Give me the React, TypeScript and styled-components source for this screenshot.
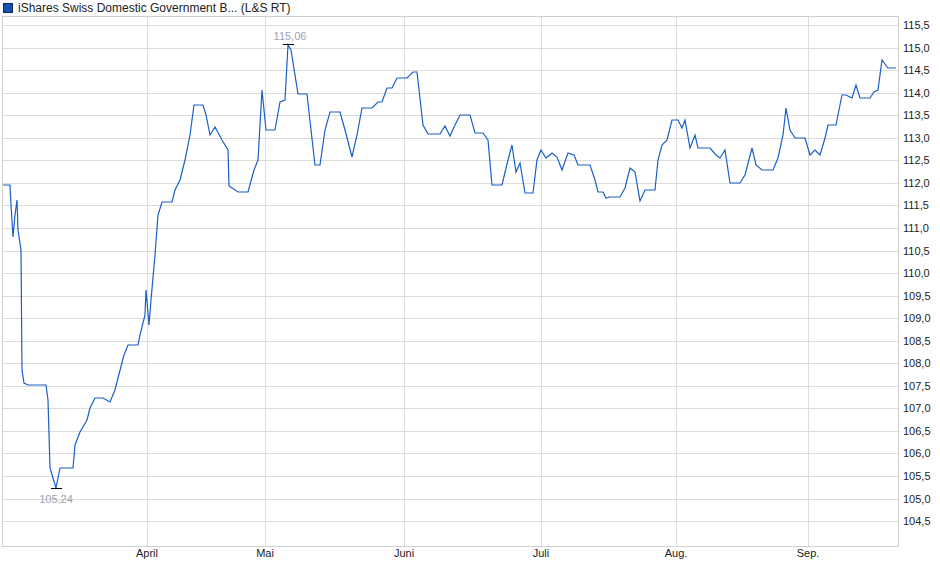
import React from "react";
import styled, { createGlobalStyle } from "styled-components";

const Global = createGlobalStyle`
  html, body { margin: 0; padding: 0; background: #fff; }
  body { font-family: "Liberation Sans", Arial, sans-serif; }
`;

const Page = styled.div`
  width: 940px;
  height: 579px;
  display: flex;
  flex-direction: column;
  background: #fff;
`;

const Legend = styled.div`
  height: 16px;
  display: flex;
  align-items: center;
  gap: 5px;
  padding-left: 3px;
  font-size: 12px;
  color: #222;
`;

const Swatch = styled.span`
  width: 8px;
  height: 8px;
  background: #1a4fb0;
  border: 1px solid #0d2a66;
`;

const Chart = styled.svg`
  display: block;
`;

const pts = `3,185 10,185 11,205 13,237 15,215 17,200 18,230 21,250 22,370 24,383 28,385 46,385 48,400 50,468 53,478 56,488 60,468 73,468 75,445 80,432 87,420 90,408 95,398 103,398 110,402 115,390 118,378 124,355 128,345 138,345 140,335 145,315 146,290 149,325 151,300 155,255 158,215 162,202 172,202 175,190 180,180 185,160 190,135 194,105 203,105 206,115 210,135 215,127 222,140 228,150 229,186 238,192 248,192 254,170 258,160 262,90 266,130 275,130 280,102 285,100 288,45 291,50 298,94 307,94 311,130 315,165 320,165 325,130 330,112 340,112 345,130 352,157 357,135 362,108 372,108 378,102 382,102 387,88 392,88 397,78 407,78 413,72 417,72 423,125 428,134 440,134 445,126 450,136 455,125 460,115 470,115 475,133 483,133 488,140 492,185 502,185 508,160 512,145 516,172 520,163 525,193 533,193 537,160 541,150 546,158 552,153 557,157 562,170 568,153 574,155 578,165 590,165 595,180 598,192 603,192 606,198 610,197 620,197 625,188 630,168 635,172 640,201 645,190 655,190 658,160 662,145 667,140 672,120 678,120 682,128 685,120 690,148 695,135 698,148 710,148 716,155 720,158 725,150 730,183 740,183 745,175 752,148 756,165 762,170 773,170 778,158 783,135 786,108 790,130 795,138 805,138 810,155 815,150 820,155 825,138 828,125 836,125 842,95 846,95 852,98 856,85 860,98 870,98 874,92 878,90 882,60 888,68 896,68`;

const months: [string, number][] = [
  ["April", 147], ["Mai", 265], ["Juni", 404], ["Juli", 541], ["Aug.", 676], ["Sep.", 808],
];

export default function App() {
  const levels: number[] = [];
  for (let i = 0; i <= 22; i++) levels.push(115.5 - i * 0.5);
  const yOf = (v: number) => 25 + (115.5 - v) * 45.1;
  return (
    <Page>
      <Global />
      <Legend>
        <Swatch />
        <span>iShares Swiss Domestic Government B... (L&amp;S RT)</span>
      </Legend>
      <Chart width={940} height={563} viewBox="0 16 940 563">
        {levels.map((v) => (
          <line key={v} x1={2} x2={898} y1={Math.round(yOf(v)) + 0.5} y2={Math.round(yOf(v)) + 0.5} stroke="#dcdcdc" />
        ))}
        {months.map(([m, x]) => (
          <line key={m} x1={x + 0.5} x2={x + 0.5} y1={16} y2={546} stroke="#dcdcdc" />
        ))}
        <rect x={2.5} y={16.5} width={896} height={530} fill="none" stroke="#cfcfcf" />
        <polyline points={pts} fill="none" stroke="#1a5ec8" strokeWidth={1.2} />
        <line x1={283} x2={294} y1={44.5} y2={44.5} stroke="#000" />
        <line x1={51} x2={62} y1={488.5} y2={488.5} stroke="#000" />
        <text x={290} y={40} fontSize={11} fill="#9aa3b5" textAnchor="middle" fontFamily="Liberation Sans, Arial, sans-serif">115,06</text>
        <text x={56} y={503} fontSize={11} fill="#9aa3b5" textAnchor="middle" fontFamily="Liberation Sans, Arial, sans-serif">105,24</text>
        {levels.map((v) => (
          <text key={v} x={903} y={Math.round(yOf(v)) + 4} fontSize={11} fill="#222" fontFamily="Liberation Sans, Arial, sans-serif">
            {v.toFixed(1).replace(".", ",")}
          </text>
        ))}
        {months.map(([m, x]) => (
          <text key={m} x={x} y={557} fontSize={11} fill="#222" textAnchor="middle" fontFamily="Liberation Sans, Arial, sans-serif">{m}</text>
        ))}
      </Chart>
    </Page>
  );
}
